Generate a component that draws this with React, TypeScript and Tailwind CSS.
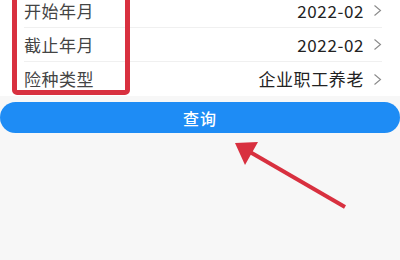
import React from "react";

const Chevron = () => (
  <svg width="9" height="13" viewBox="0 0 9 13" className="ml-[9px]">
    <path d="M1.5 1.5 L7.5 6.5 L1.5 11.5" fill="none" stroke="#8a8a8a" strokeWidth="1.1" />
  </svg>
);

const rows = [
  { label: "开始年月", value: "2022-02" },
  { label: "截止年月", value: "2022-02" },
  { label: "险种类型", value: "企业职工养老" },
];

export default function App() {
  return (
    <div
      className="relative w-[400px] h-[260px] overflow-hidden bg-[#f7f7f7]"
      style={{ fontFamily: '"Noto Sans CJK SC", "Noto Sans", sans-serif' }}
    >
      <div className="-mt-[6px] bg-white pl-[24px] pr-[18px]">
        {rows.map((r, i) => (
          <div
            key={r.label}
            className={`flex h-[34px] items-center justify-between ${i < rows.length - 1 ? "border-b border-[#f0f0f0]" : ""}`}
          >
            <span className="text-[17px] leading-[20px] text-[#444] tracking-[0.5px]">{r.label}</span>
            <span className="flex items-center text-[17px] leading-[20px] text-[#222] tracking-[0.6px]">
              {r.value}
              <Chevron />
            </span>
          </div>
        ))}
      </div>

      <div className="mt-[6px] flex h-[31px] w-full items-center justify-center rounded-full bg-[#1e8cf5]">
        <span className="text-[16px] font-medium text-white tracking-[1px]">查询</span>
      </div>

      <div className="pointer-events-none absolute left-[12px] top-[-10px] h-[105px] w-[118px] rounded-[5px] border-[5px] border-[#d8303f]" />

      <svg className="pointer-events-none absolute left-0 top-0" width="400" height="260">
        <line x1="345" y1="207" x2="250" y2="152" stroke="#d8303f" strokeWidth="4" />
        <polygon points="235,143 258,142 245,165" fill="#d8303f" />
      </svg>
    </div>
  );
}
